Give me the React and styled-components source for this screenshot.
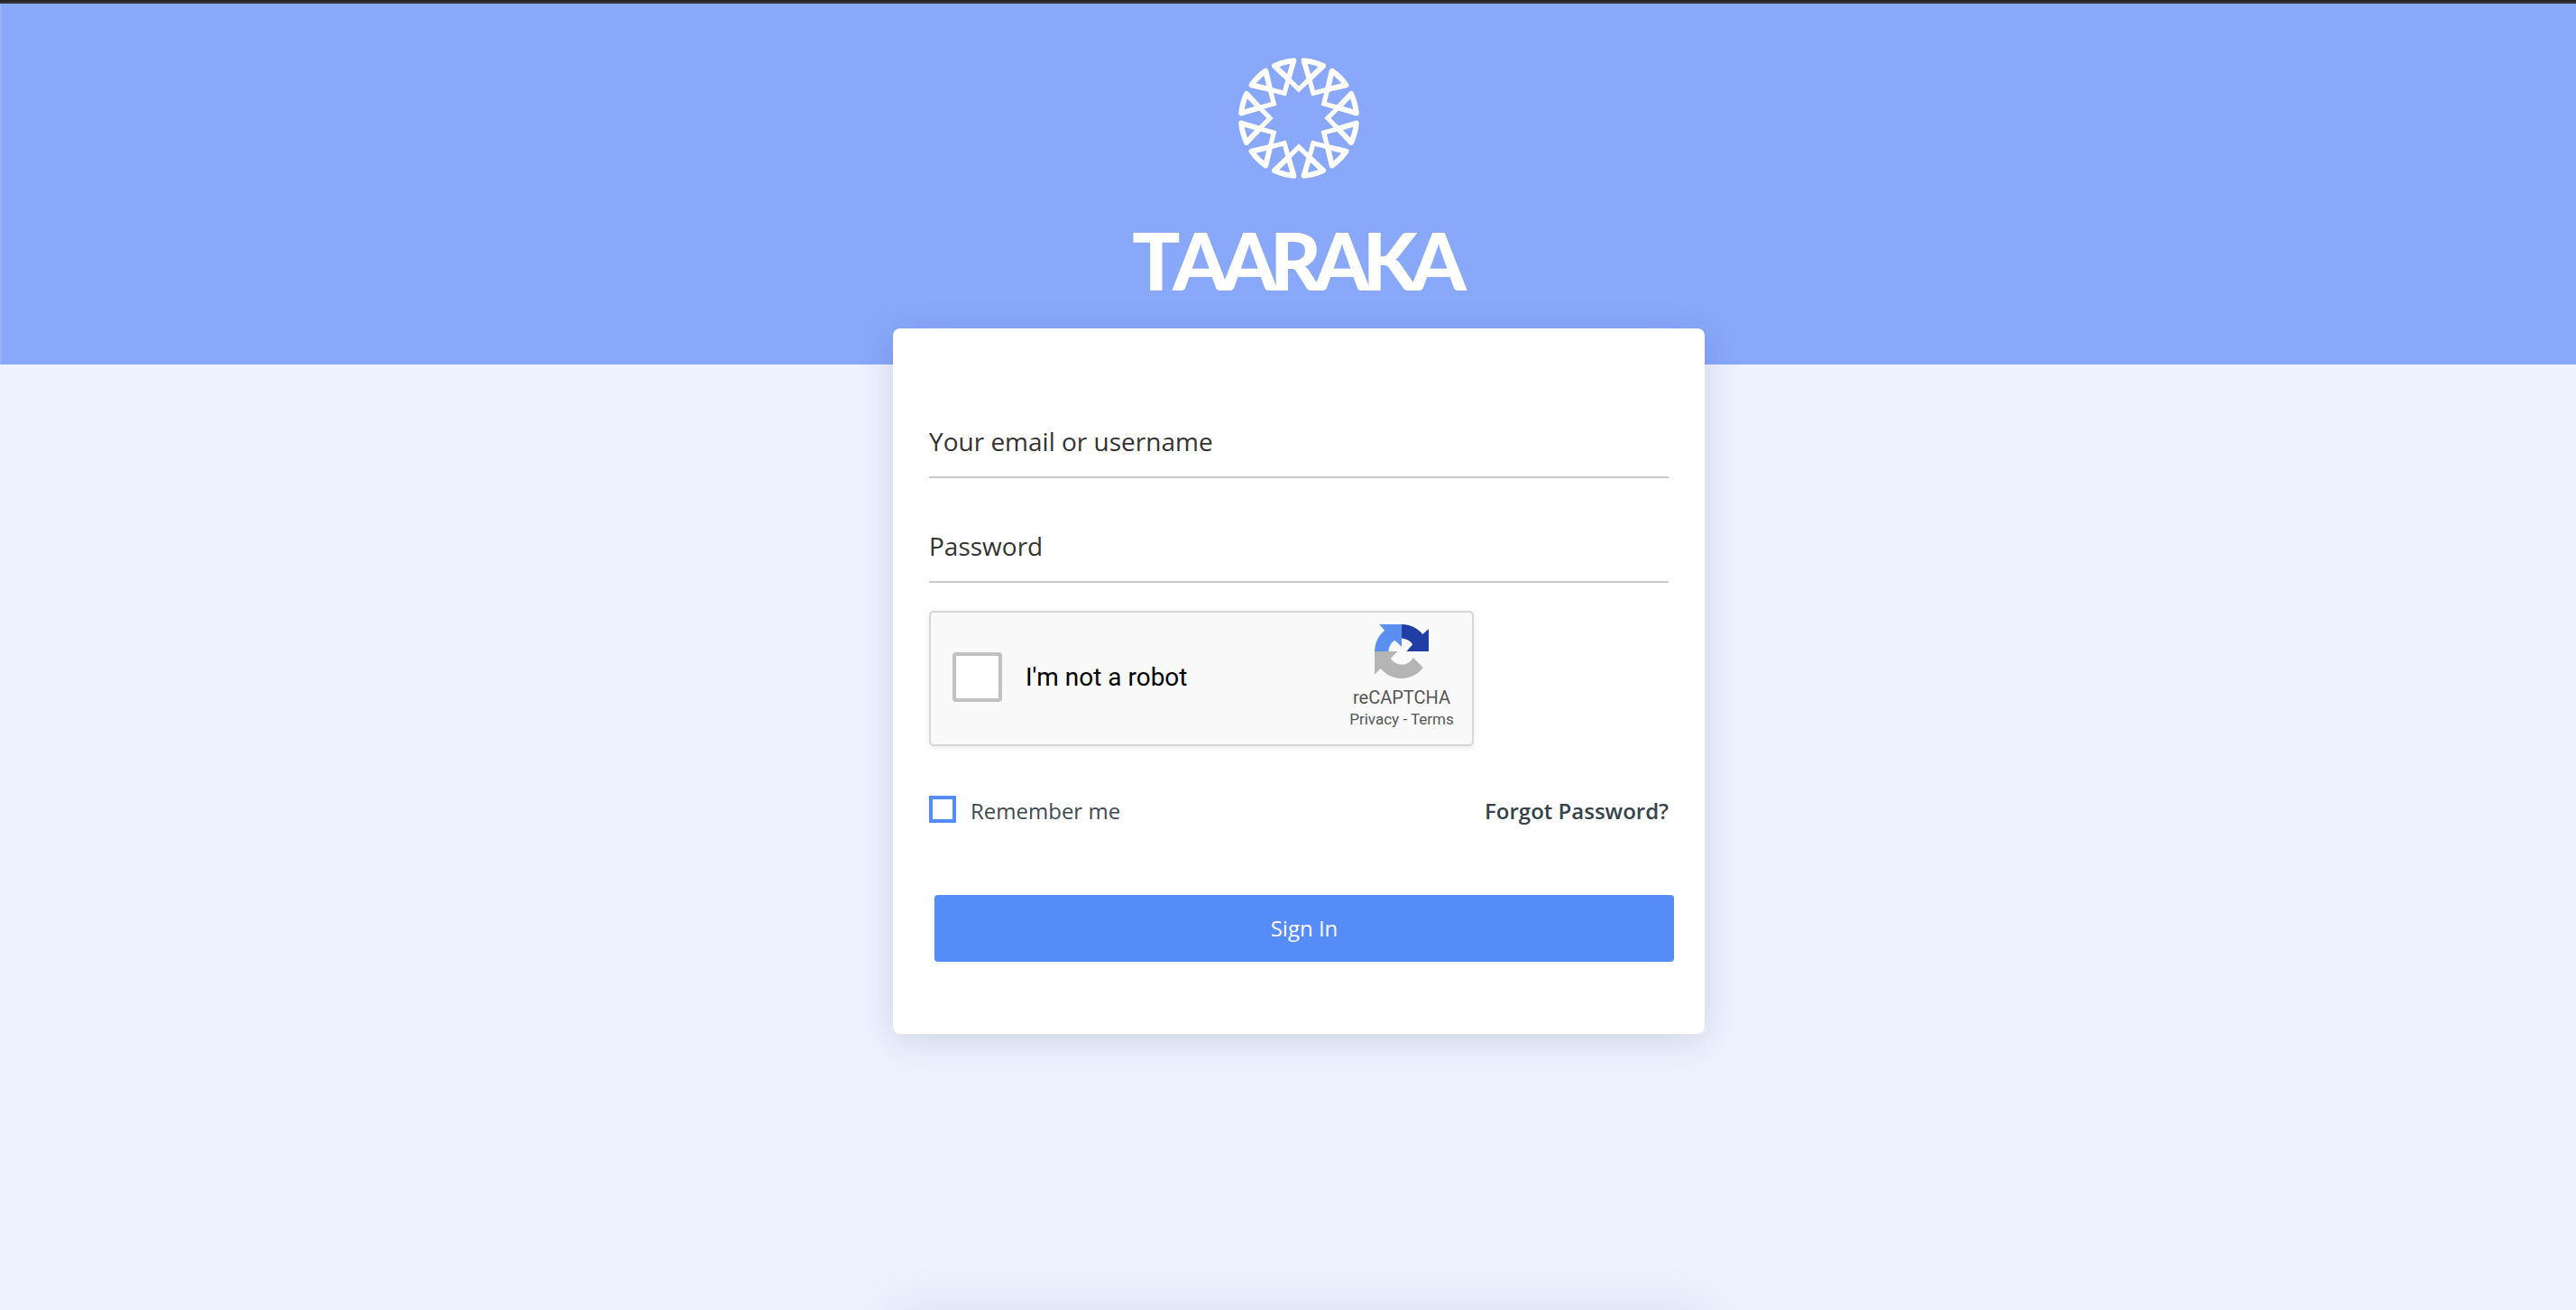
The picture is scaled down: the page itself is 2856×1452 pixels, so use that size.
import React from "react";
import styled, { createGlobalStyle } from "styled-components";

const GlobalStyle = createGlobalStyle`
  html, body {
    margin: 0;
    padding: 0;
    height: 100%;
    overflow: hidden;
    background: #eef2ff;
    font-family: "Open Sans", "Liberation Sans", sans-serif;
  }
  * {
    box-sizing: border-box;
  }
`;

const Page = styled.div`
  height: 1452px;
  overflow: hidden;
  background: #eef2ff;
`;

const TopEdge = styled.div`
  height: 4px;
  background: linear-gradient(#1f1f24, #3a3a40);
`;

const Banner = styled.header`
  height: 400px;
  padding: 60px 0 0 24px;
  background: #89a8fa;
  box-shadow: inset 2px 0 0 rgba(255, 255, 255, 0.12);
  display: flex;
  flex-direction: column;
  align-items: center;
`;

const Wordmark = styled.div`
  margin: 40px 7px 0 0;
  font-family: "Lato", "Liberation Sans", sans-serif;
  font-size: 88px;
  line-height: 100px;
  font-weight: 900;
  font-kerning: none;
  letter-spacing: -8px;
  color: #fff;
  filter: blur(0.6px);
`;

const Content = styled.main`
  padding-left: 24px;
  display: flex;
  flex-direction: column;
  align-items: center;
`;

const Card = styled.form`
  position: relative;
  width: 900px;
  margin-top: -40px;
  padding: 106px 40px 80px;
  background: #fff;
  border-radius: 8px;
  box-shadow: 0 8px 40px rgba(30, 40, 70, 0.15);
`;

const Field = styled.input`
  display: block;
  width: 100%;
  height: 60px;
  margin-bottom: ${(p) => p.$gap || 56}px;
  padding: 0 0 20px;
  border: 0;
  border-bottom: 2px solid #cbcbcb;
  outline: none;
  background: transparent;
  font-family: inherit;
  font-size: 28px;
  color: #333;

  &::placeholder {
    color: #333;
    opacity: 1;
  }
`;

const Captcha = styled.div`
  width: 604px;
  height: 150px;
  display: flex;
  align-items: center;
  padding: 0 22px 4px 24px;
  background: #f9f9f9;
  border: 2px solid #d6d6d6;
  border-radius: 5px;
  box-shadow: 0 2px 6px rgba(0, 0, 0, 0.08);
  font-family: Roboto, "Liberation Sans", sans-serif;
`;

const CaptchaBox = styled.span`
  width: 55px;
  height: 55px;
  background: #fff;
  border: 4px solid #c1c1c1;
  border-radius: 4px;
`;

const CaptchaLabel = styled.span`
  margin-left: 26px;
  flex: 1;
  font-size: 28px;
  color: #000;
`;

const CaptchaBrand = styled.div`
  width: 112px;
  display: flex;
  flex-direction: column;
  align-items: center;
  color: #555;
`;

const BrandName = styled.span`
  margin-top: 8px;
  font-size: 20px;
  line-height: 26px;
`;

const BrandLinks = styled.span`
  font-size: 17px;
  line-height: 22px;
  white-space: nowrap;
`;

const OptionsRow = styled.div`
  margin-top: 55px;
  height: 30px;
  display: flex;
  align-items: center;
  justify-content: space-between;
`;

const Remember = styled.label`
  display: flex;
  align-items: center;
  gap: 16px;
  font-size: 24px;
  color: #3e4a52;
`;

const RememberText = styled.span`
  padding-top: 2px;
`;

const Check = styled.input`
  appearance: none;
  width: 30px;
  height: 30px;
  margin: 0;
  background: #fff;
  border: 4px solid #558cf8;
`;

const Forgot = styled.a`
  padding-top: 2px;
  font-size: 24px;
  font-weight: 600;
  color: #36424a;
`;

const SignIn = styled.button`
  display: block;
  width: 820px;
  height: 74px;
  margin: 80px 0 0 6px;
  padding: 0 0 2px;
  border: 0;
  border-radius: 4px;
  background: #558cf8;
  color: #fff;
  font-family: inherit;
  font-size: 24px;
`;

const NextPanel = styled.div`
  width: 900px;
  height: 60px;
  margin-top: 312px;
  background: #fff;
  box-shadow: 0 0 60px rgba(30, 40, 70, 0.13);
`;

const LogoSvg = styled.svg`
  display: block;
  filter: blur(0.6px);
`;

const petals = Array.from({ length: 12 }, (_, i) => 15 + i * 30);

function polar(r, deg) {
  const a = (deg * Math.PI) / 180;
  return `${(r * Math.sin(a)).toFixed(2)} ${(-r * Math.cos(a)).toFixed(2)}`;
}

const ringPoints = Array.from({ length: 24 }, (_, i) =>
  polar(i % 2 ? 45 : 32, i * 15)
).join(" ");

const Logo = () => (
  <LogoSvg width="134" height="134" viewBox="-67 -67 134 134">
    <polygon
      points={ringPoints}
      fill="none"
      stroke="#fff"
      strokeWidth="5.2"
      strokeLinejoin="miter"
    />
    {petals.map((deg) => (
      <path
        key={deg}
        d={`M${polar(45, deg)} L${polar(64, deg - 10)} A64 64 0 0 1 ${polar(64, deg + 10)} Z`}
        fill="none"
        stroke="#fff"
        strokeWidth="6"
        strokeLinejoin="round"
      />
    ))}
  </LogoSvg>
);

const quarterArrow =
  "M64 32V5.5l-7.16 6.35C50.95 4.67 42.03.09 32.05.09v16.43c.49 0 .86.06 1.14.16 4.97.39 9.28 3.14 11.82 7.12L37.7 32z";

const RecaptchaIcon = () => (
  <svg width="60" height="60" viewBox="0 0 64 64">
    <path d={quarterArrow} fill="#213da6" />
    <path d={quarterArrow} fill="#5a8ff0" transform="rotate(-90 32 32)" />
    <path
      d="M.001 32.045l.033 1.37v25.898l7.16-7.16c5.86 7.173 14.774 11.754 24.76 11.754 10.4 0 19.622-4.96 25.458-12.64L45.676 39.4a15.55 15.55 0 0 1-4.754 5.334c-2.05 1.6-4.952 2.906-8.968 2.906-.485 0-.86-.057-1.135-.163-4.976-.393-9.288-3.14-11.828-7.124l8.307-8.307c-10.522.04-22.4.066-27.295 0"
      fill="#b5b5b5"
    />
  </svg>
);

export default function App() {
  return (
    <Page>
      <GlobalStyle />
      <TopEdge />
      <Banner>
        <Logo />
        <Wordmark>TAARAKA</Wordmark>
      </Banner>
      <Content>
        <Card onSubmit={(e) => e.preventDefault()}>
          <Field type="text" placeholder="Your email or username" />
          <Field type="password" placeholder="Password" $gap={31} />
          <Captcha>
            <CaptchaBox />
            <CaptchaLabel>I'm not a robot</CaptchaLabel>
            <CaptchaBrand>
              <RecaptchaIcon />
              <BrandName>reCAPTCHA</BrandName>
              <BrandLinks>Privacy - Terms</BrandLinks>
            </CaptchaBrand>
          </Captcha>
          <OptionsRow>
            <Remember>
              <Check type="checkbox" />
              <RememberText>Remember me</RememberText>
            </Remember>
            <Forgot>Forgot Password?</Forgot>
          </OptionsRow>
          <SignIn type="submit">Sign In</SignIn>
        </Card>
        <NextPanel />
      </Content>
    </Page>
  );
}
